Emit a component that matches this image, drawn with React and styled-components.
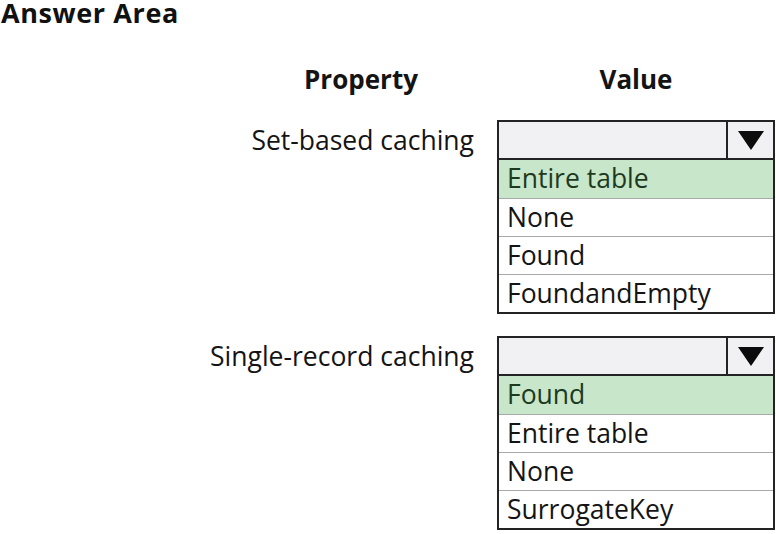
import React from 'react';
import styled, { createGlobalStyle } from 'styled-components';

const GlobalStyle = createGlobalStyle`
  html, body {
    margin: 0;
    padding: 0;
    background: #ffffff;
    overflow: hidden;
  }
  body {
    font-family: 'Open Sans', Lato, sans-serif;
    color: #141414;
  }
  * {
    box-sizing: border-box;
  }
`;

const Page = styled.div`
  width: 776px;
  height: 534px;
  background: #fff;
`;

const Title = styled.h1`
  margin: 0;
  padding-left: 1px;
  font-size: 27px;
  line-height: 26px;
  font-weight: 700;
  letter-spacing: 0.6px;
  color: #111;
`;

const Grid = styled.div`
  display: grid;
  grid-template-columns: 474px 278px;
  column-gap: 23px;
  row-gap: 22px;
  margin-top: 36px;
`;

const ColumnHead = styled.div`
  font-size: 26px;
  font-weight: 700;
  line-height: 34px;
  text-align: center;
  justify-self: ${(p) => (p.$right ? 'end' : 'stretch')};
  width: ${(p) => (p.$right ? '226px' : 'auto')};
  margin-bottom: 2px;
`;

const Label = styled.div`
  font-size: 26.5px;
  line-height: 40px;
  text-align: right;
  align-self: start;
`;

const Dropdown = styled.div`
  display: flex;
  flex-direction: column;
`;

const Select = styled.div`
  display: grid;
  grid-template-columns: 1fr 47px;
  height: 40px;
  border: 2px solid #232323;
  background: #f1f1f3;
`;

const Arrow = styled.div`
  display: flex;
  align-items: center;
  justify-content: center;
  padding-top: 1px;
  border-left: 2px solid #232323;
`;

const Options = styled.div`
  display: flex;
  flex-direction: column;
  border: 2px solid #232323;
  border-top: none;
`;

const Option = styled.div`
  height: 38px;
  padding-left: 8px;
  font-size: 26.5px;
  line-height: 37px;
  white-space: nowrap;
  background: ${(p) => (p.$selected ? '#c8e6c9' : '#fff')};
  color: ${(p) => (p.$selected ? '#1d3a1f' : '#141414')};
  & + & {
    border-top: 1px solid #a9a9a9;
  }
`;

const Triangle = () => (
  <svg width="26" height="19" viewBox="0 0 26 19">
    <polygon points="0,0 26,0 13,19" fill="#0c0c0c" />
  </svg>
);

const properties = [
  {
    name: 'Set-based caching',
    options: ['Entire table', 'None', 'Found', 'FoundandEmpty'],
  },
  {
    name: 'Single-record caching',
    options: ['Found', 'Entire table', 'None', 'SurrogateKey'],
  },
];

const App = () => {
  return (
    <Page>
      <GlobalStyle />
      <Title>Answer Area</Title>
      <Grid>
        <ColumnHead $right>Property</ColumnHead>
        <ColumnHead>Value</ColumnHead>
        {properties.map((prop) => (
          <React.Fragment key={prop.name}>
            <Label>{prop.name}</Label>
            <Dropdown>
              <Select>
                <div />
                <Arrow>
                  <Triangle />
                </Arrow>
              </Select>
              <Options>
                {prop.options.map((opt, i) => (
                  <Option key={opt} $selected={i === 0}>
                    {opt}
                  </Option>
                ))}
              </Options>
            </Dropdown>
          </React.Fragment>
        ))}
      </Grid>
    </Page>
  );
};

export default App;
